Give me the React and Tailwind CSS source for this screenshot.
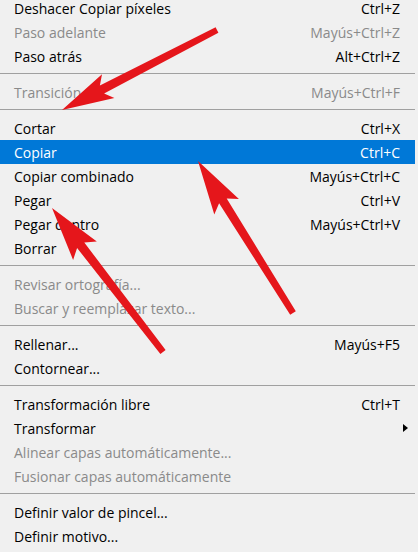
import React from 'react';

const items = [
  { label: 'Deshacer Copiar píxeles', keys: 'Ctrl+Z' },
  { label: 'Paso adelante', keys: 'Mayús+Ctrl+Z', disabled: true },
  { label: 'Paso atrás', keys: 'Alt+Ctrl+Z' },
  { sep: true },
  { label: 'Transición', keys: 'Mayús+Ctrl+F', disabled: true },
  { sep: true },
  { label: 'Cortar', keys: 'Ctrl+X' },
  { label: 'Copiar', keys: 'Ctrl+C', active: true },
  { label: 'Copiar combinado', keys: 'Mayús+Ctrl+C' },
  { label: 'Pegar', keys: 'Ctrl+V' },
  { label: 'Pegar dentro', keys: 'Mayús+Ctrl+V' },
  { label: 'Borrar' },
  { sep: true },
  { label: 'Revisar ortografía...', disabled: true },
  { label: 'Buscar y reemplazar texto...', disabled: true },
  { sep: true },
  { label: 'Rellenar...', keys: 'Mayús+F5' },
  { label: 'Contornear...' },
  { sep: true },
  { label: 'Transformación libre', keys: 'Ctrl+T' },
  { label: 'Transformar', submenu: true },
  { label: 'Alinear capas automáticamente...', disabled: true },
  { label: 'Fusionar capas automáticamente', disabled: true },
  { sep: true },
  { label: 'Definir valor de pincel...' },
  { label: 'Definir motivo...' },
];

// tip/tail in page pixels; head length and half width along the arrow axis
function arrowPoints([tx, ty], [ex, ey], headLen, headHalf, w0, w1) {
  const dx = ex - tx;
  const dy = ey - ty;
  const len = Math.hypot(dx, dy);
  const ux = dx / len;
  const uy = dy / len;
  const nx = -uy;
  const ny = ux;
  const at = (a, b) => [tx + ux * a + nx * b, ty + uy * a + ny * b];
  const base = headLen - 7;
  const pts = [
    at(0, 0),
    at(headLen, headHalf),
    at(base, w0 / 2),
    at(len, w1 / 2),
    at(len, -w1 / 2),
    at(base, -w0 / 2),
    at(headLen, -headHalf),
  ];
  return pts.map((p) => p.map((v) => v.toFixed(1)).join(',')).join(' ');
}

function Arrows() {
  return (
    <svg className="pointer-events-none absolute left-0 top-0" width="418" height="552">
      <g fill="#e5161b">
        <polygon points={arrowPoints([62, 110], [217, 30], 52, 13.5, 9, 6)} />
        <polygon points={arrowPoints([198, 161], [293, 313], 54, 14.5, 9, 6.5)} />
        <polygon points={arrowPoints([52, 208], [163, 352], 54, 15, 9, 6.5)} />
      </g>
    </svg>
  );
}

export default function App() {
  return (
    <div className="relative h-[552px] w-[418px] overflow-hidden bg-[#f0f0f0] font-['Open_Sans',sans-serif] text-[14px]">
      <div className="-mt-[4px] flex w-[415px] flex-col">
        {items.map((it, i) =>
          it.sep ? (
            <div key={i} className="pb-[6px] pt-[5px]">
              <div className="h-px bg-[#a0a0a0]" />
            </div>
          ) : (
            <div
              key={i}
              className={
                'flex h-[24px] items-center justify-between pl-[14px] pr-[15px] ' +
                (it.active
                  ? 'bg-[#0078d7] text-white'
                  : it.disabled
                    ? 'text-[#8a8a8a]'
                    : 'text-black')
              }
            >
              <span>{it.label}</span>
              {it.keys && <span>{it.keys}</span>}
              {it.submenu && (
                <span className="mr-[-8px] h-0 w-0 border-y-[4px] border-l-[5px] border-y-transparent border-l-black" />
              )}
            </div>
          )
        )}
      </div>
      <Arrows />
    </div>
  );
}
